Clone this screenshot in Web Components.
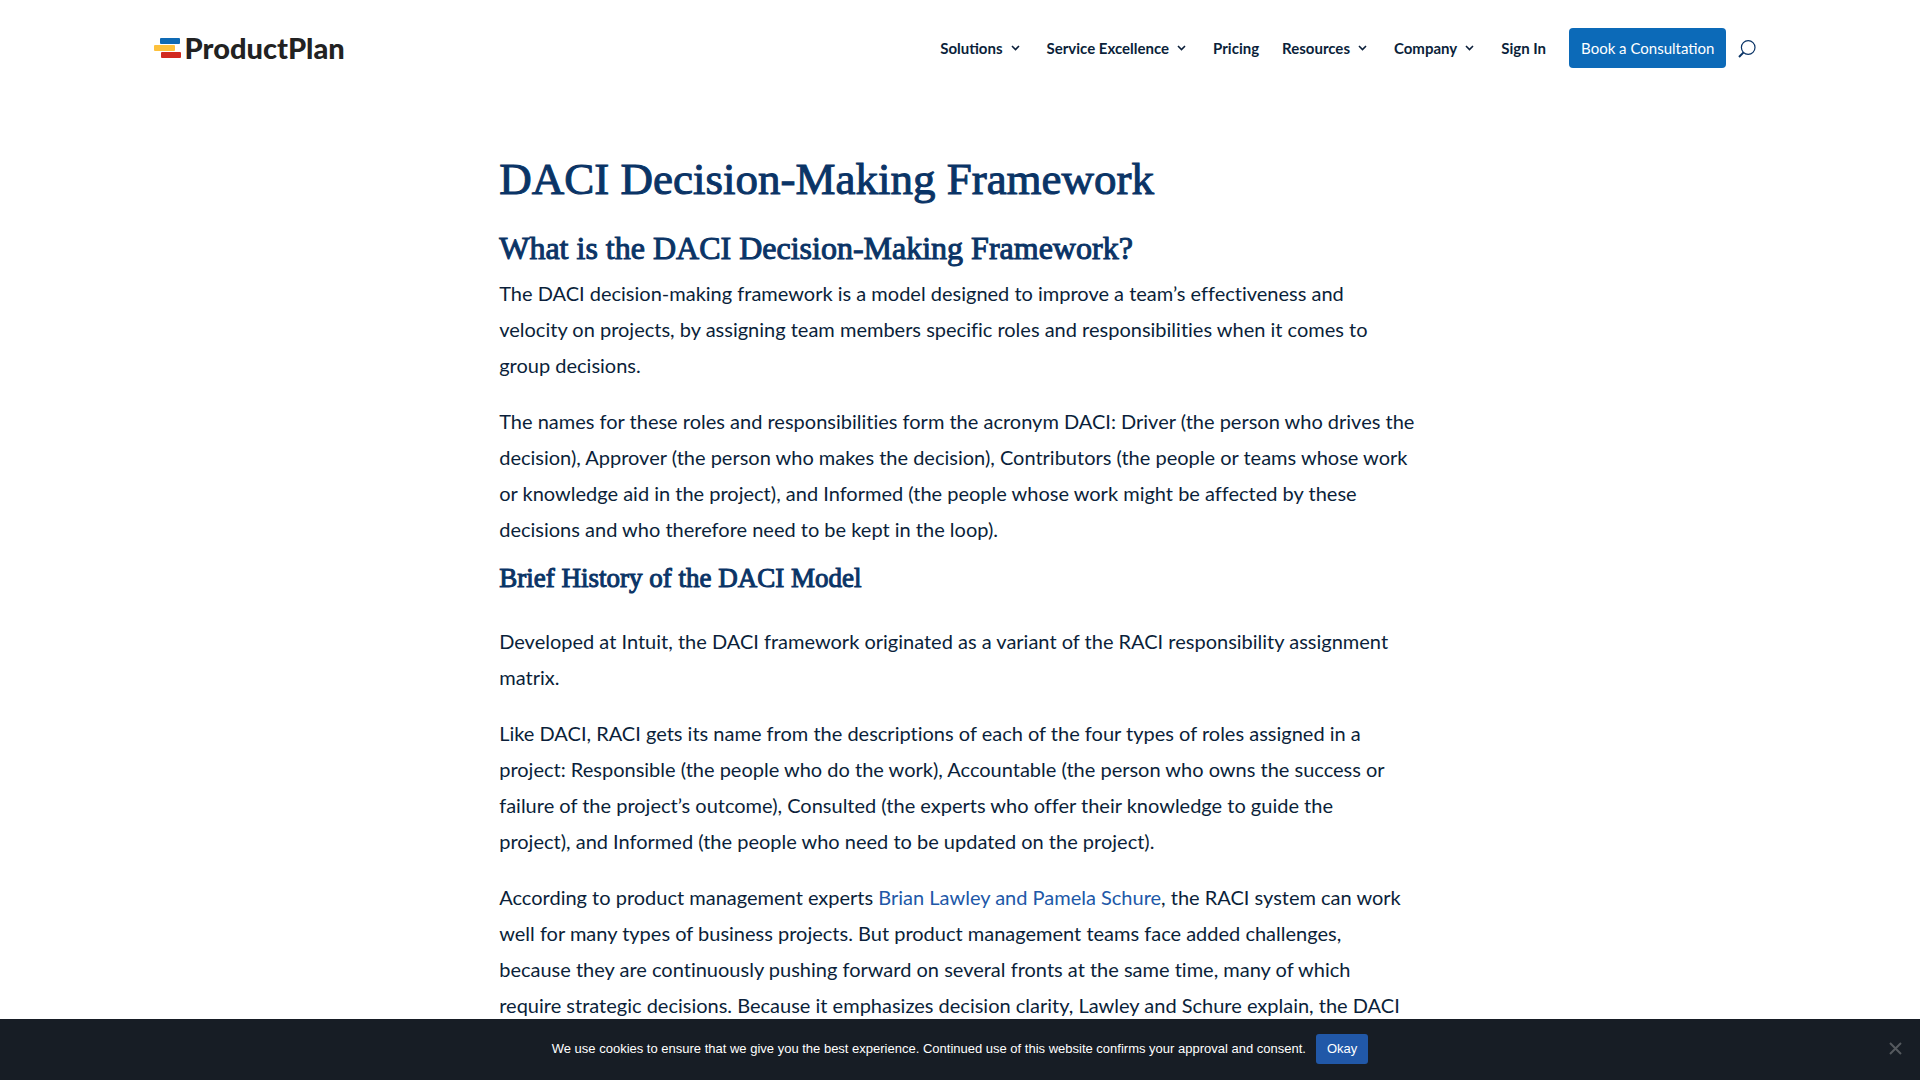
<!DOCTYPE html>
<html lang="en">
<head>
<meta charset="utf-8">
<title>DACI Decision-Making Framework | ProductPlan</title>
<style>
  body { margin: 0; background: #fff; color: #0b1f3a; font: 20px/36px Lato, "Open Sans", sans-serif; font-variant-ligatures: none; }
</style>
</head>
<body>
<site-header></site-header>
<glossary-article>
  <span slot="title">DACI Decision-Making Framework</span>
</glossary-article>
<cookie-notice>We use cookies to ensure that we give you the best experience. Continued use of this website confirms your approval and consent.</cookie-notice>

<script>
function define(name, html) {
  customElements.define(name, class extends HTMLElement {
    constructor() {
      super();
      this.attachShadow({ mode: "open" }).innerHTML = html;
    }
  });
}

define("brand-logo", `
<style>
  :host { display: block; }
  a { display: flex; align-items: center; gap: 4px; text-decoration: none; color: #222; font: 900 29px/32px Lato, sans-serif; }
  svg { display: block; }
</style>
<a href="#" aria-label="ProductPlan"><svg width="27" height="20" viewBox="0 0 27 20" aria-hidden="true">
  <rect x="6" y="0" width="20" height="6" rx="1" fill="#0f6ab4"/>
  <rect x="0" y="7" width="21" height="6" rx="1" fill="#fdc13c"/>
  <rect x="7" y="14" width="20" height="6" rx="1" fill="#d12a20"/>
</svg><span>ProductPlan</span></a>`);

define("nav-item", `
<style>
  :host { display: block; }
  a { display: flex; align-items: center; gap: 8px; color: #0b1f3a; text-decoration: none; font: 700 15px/24px Lato, sans-serif; white-space: nowrap; }
  svg { display: none; margin-right: 4px; }
  :host([menu]) svg { display: block; }
</style>
<a href="#"><slot></slot><svg width="9" height="6" viewBox="0 0 9 6" aria-hidden="true"><path d="M1 1l3.5 3.5L8 1" fill="none" stroke="#0b1f3a" stroke-width="1.6"/></svg></a>`);

define("site-header", `
<style>
  :host { display: block; }
  header { display: flex; align-items: center; justify-content: space-between; height: 96px; padding: 0 8%; }
  nav { display: flex; align-items: center; gap: 23px; }
  .cta { display: block; background: #0c6ab8; color: #fff; border-radius: 4px; padding: 8px 12px; font: 400 15px/24px Lato, sans-serif; text-decoration: none; white-space: nowrap; }
  button { display: block; border: 0; background: none; padding: 12px 10px 10px; margin-left: -21px; cursor: pointer; }
  svg { display: block; }
</style>
<header>
  <brand-logo></brand-logo>
  <nav aria-label="Main">
    <nav-item menu>Solutions</nav-item>
    <nav-item menu>Service Excellence</nav-item>
    <nav-item>Pricing</nav-item>
    <nav-item menu>Resources</nav-item>
    <nav-item menu>Company</nav-item>
    <nav-item>Sign In</nav-item>
    <a class="cta" href="#">Book a Consultation</a>
    <button aria-label="Search"><svg width="18" height="18" viewBox="0 0 18 18" aria-hidden="true" fill="none" stroke="#0a3466" stroke-width="1.2"><circle cx="10.2" cy="7.5" r="6.8"/><path d="M5.6 12.4L1 17" stroke-width="2"/></svg></button>
  </nav>
</header>`);

define("glossary-article", `
<style>
  :host { display: block; }
  main { width: 48%; margin: 0 auto; padding: 55px 0 0; }
  h1, h2, h3 { margin: 0; color: #0a3466; font-family: "Liberation Serif", serif; font-weight: 400; -webkit-text-stroke: 1px #0a3466; }
  h1 { font-size: 45px; line-height: 56px; padding-bottom: 21px; }
  h2 { font-size: 32px; line-height: 40px; padding-bottom: 7px; }
  h3 { font-size: 27px; line-height: 36px; padding-bottom: 27px; }
  p { margin: 0 0 20px; }
  p.tight { margin-bottom: 13px; }
  a { color: #2158a8; text-decoration: none; }
</style>
<main>
  <h1><slot name="title"></slot></h1>
  <h2>What is the DACI Decision-Making Framework?</h2>
  <p>The DACI decision-making framework is a model designed to improve a team’s effectiveness and<br>velocity on projects, by assigning team members specific roles and responsibilities when it comes to<br>group decisions.</p>
  <p class="tight">The names for these roles and responsibilities form the acronym DACI: Driver (the person who drives the decision), Approver (the person who makes the decision), Contributors (the people or teams whose work or knowledge aid in the project), and Informed (the people whose work might be affected by these decisions and who therefore need to be kept in the loop).</p>
  <h3>Brief History of the DACI Model</h3>
  <p>Developed at Intuit, the DACI framework originated as a variant of the RACI responsibility assignment matrix.</p>
  <p>Like DACI, RACI gets its name from the descriptions of each of the four types of roles assigned in a project: Responsible (the people who do the work), Accountable (the person who owns the success or failure of the project’s outcome), Consulted (the experts who offer their knowledge to guide the<br>project), and Informed (the people who need to be updated on the project).</p>
  <p>According to product management experts <a href="#">Brian Lawley and Pamela Schure</a>, the RACI system can work well for many types of business projects. But product management teams face added challenges,<br>because they are continuously pushing forward on several fronts at the same time, many of which<br>require strategic decisions. Because it emphasizes decision clarity, Lawley and Schure explain, the DACI</p>
</main>`);

define("cookie-notice", `
<style>
  :host { position: fixed; left: 0; right: 0; bottom: 0; display: flex; align-items: center; justify-content: center; gap: 10px; box-sizing: border-box; height: 61px; padding-bottom: 2px; background: #171d25; color: #fff; font: 13px/20px "Liberation Sans", sans-serif; }
  button { border: 0; margin: 0; font: 13px/20px "Liberation Sans", sans-serif; }
  .ok { background: #2158a8; color: #fff; border-radius: 3px; padding: 5px 11px; }
  .close { position: absolute; right: 18px; background: none; padding: 0; }
  svg { display: block; }
</style>
<span><slot></slot></span>
<button class="ok">Okay</button>
<button class="close" aria-label="Close"><svg width="13" height="13" viewBox="0 0 13 13" aria-hidden="true"><path d="M1 1l11 11M12 1L1 12" stroke="#55595e" stroke-width="2"/></svg></button>`);
</script>
</body>
</html>
